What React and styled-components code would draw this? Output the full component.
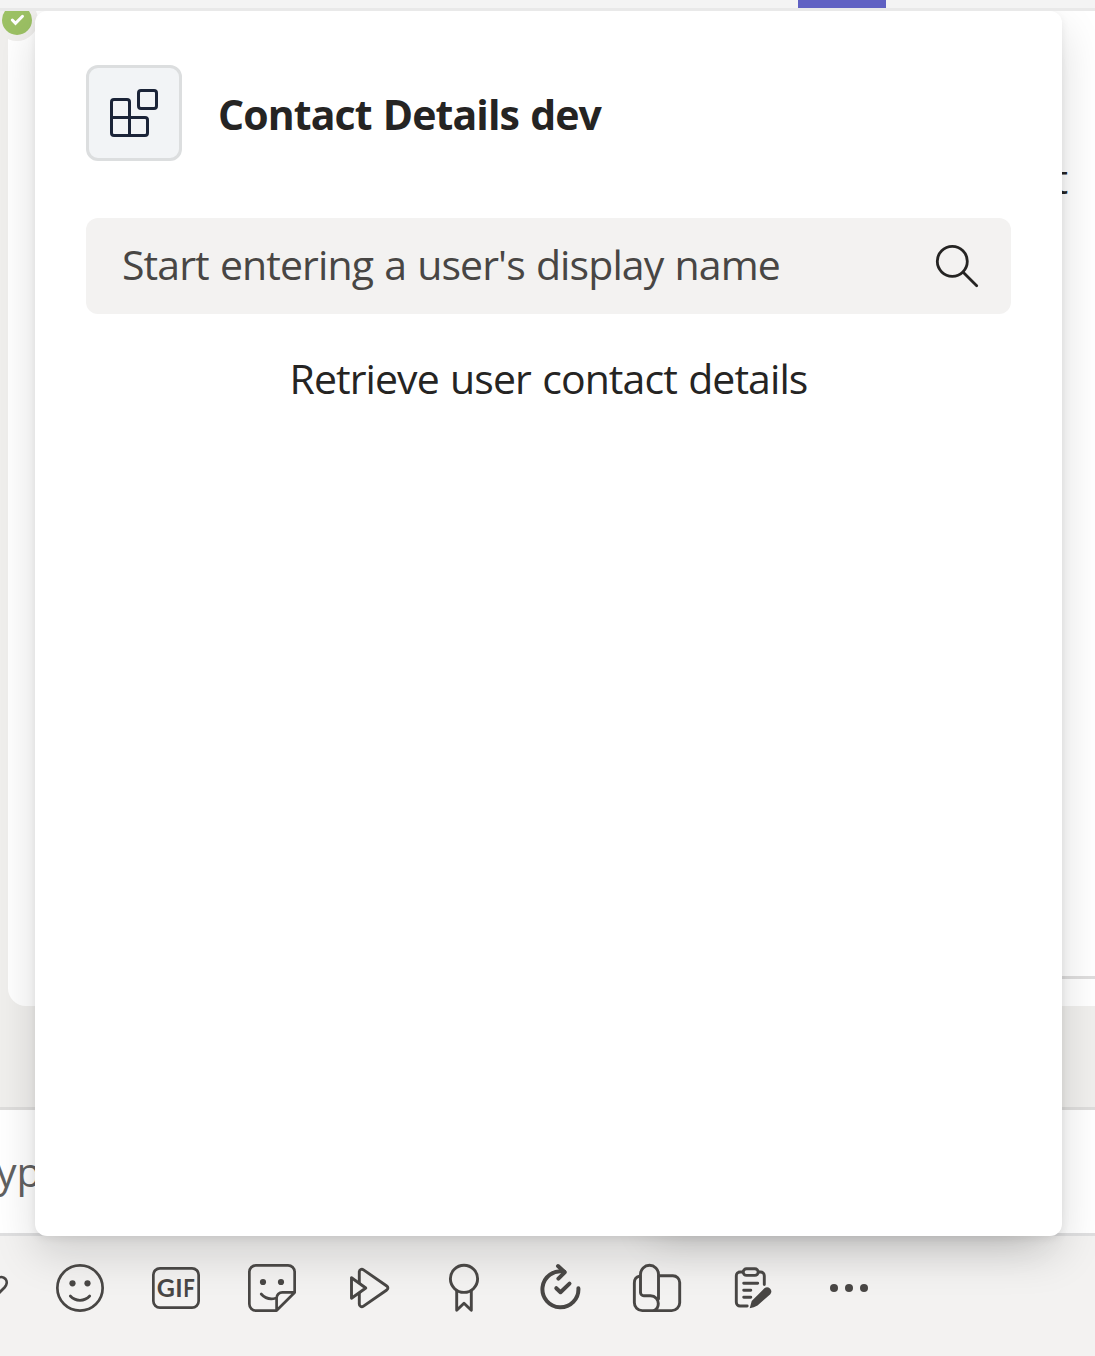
import React from "react";
import styled, { createGlobalStyle } from "styled-components";

const Global = createGlobalStyle`
  * { box-sizing: border-box; }
  body { margin: 0; font-family: "Open Sans", "Noto Sans", sans-serif; color: #252423; }
  svg { display: block; flex: none; }
`;

const Window = styled.div`
  position: relative;
  width: 1095px;
  height: 1356px;
  overflow: hidden;
  display: flex;
  flex-direction: column;
  background: #f2f1f0;
`;

const TopBar = styled.header`
  height: 11px;
  flex: none;
  padding-left: 798px;
  background: #f4f4f4;
  border-bottom: 3px solid #e9e9e9;
`;

const ActiveTab = styled.div`
  width: 88px;
  height: 8px;
  background: #6061c3;
`;

const Conversation = styled.main`
  position: relative;
  height: 1096px;
  flex: none;
  padding: 0 0 101px 8px;
  background: #f0efed;
  overflow: hidden;
`;

const Message = styled.section`
  height: 995px;
  display: flex;
  flex-direction: column;
  align-items: flex-end;
  background: #fff;
  border-bottom-left-radius: 18px;
`;

const MessageText = styled.p`
  flex: 1;
  width: 100%;
  margin: 0;
  padding: 139px 27px 0 0;
  font-size: 41px;
  line-height: 56px;
  text-align: right;
`;

const MessageFooter = styled.div`
  width: 900px;
  height: 30px;
  border-top: 3px solid #dedddd;
`;

const Presence = styled.svg`
  position: absolute;
  left: -4px;
  top: -12px;
`;

const ComposeBox = styled.div`
  height: 129px;
  flex: none;
  padding-top: 33px;
  border-top: 3px solid #dedddc;
  border-bottom: 3px solid #dfdfe0;
  background: #fff;
  color: #616161;
  font-size: 41px;
  line-height: 56px;
  text-indent: -4px;
`;

const Toolbar = styled.nav`
  height: 120px;
  display: flex;
  align-items: flex-start;
  gap: 48px;
  padding-top: 28px;
  background: #f3f2f1;
`;

const ToolIcon = styled.svg`
  position: relative;
  z-index: 2;
  height: 48px;
  width: ${(p) => p.$width || 48}px;
  margin-left: ${(p) => p.$nudge || 0}px;
  overflow: visible;
  fill: none;
  stroke: #484644;
  stroke-width: ${(p) => p.$stroke || 2.7};
  stroke-linecap: round;
  stroke-linejoin: round;

  .solid { fill: #484644; stroke: none; }
  text { font: 700 25px Lato, sans-serif; fill: #484644; stroke: none; }
`;

const ShadowFrame = styled.div`
  position: absolute;
  inset: 11px 0 0 0;
  overflow: hidden;
`;

const DeepShadow = styled.div`
  position: absolute;
  left: 655px;
  top: 40px;
  width: 375px;
  height: 1175px;
  box-shadow: 0 10px 40px rgba(0, 0, 0, 0.16);
`;

const Popup = styled.section`
  position: absolute;
  left: 35px;
  top: 0;
  width: 1027px;
  height: 1225px;
  display: flex;
  flex-direction: column;
  padding: 54px 51px 0;
  background: #fff;
  border-radius: 12px;
  box-shadow: 0 19px 44px rgba(0, 0, 0, 0.14), 0 3px 8px rgba(0, 0, 0, 0.07);
`;

const PopupHeader = styled.div`
  display: flex;
  align-items: center;
  gap: 36px;
  height: 96px;
`;

const AppTile = styled.div`
  width: 96px;
  height: 96px;
  display: grid;
  place-items: center;
  border: 3px solid #dcdedf;
  border-radius: 12px;
  background: #f2f4f6;
`;

const Title = styled.h1`
  margin: 0;
  padding-top: 1px;
  font-size: 41px;
  line-height: 56px;
  font-weight: 700;
  letter-spacing: -0.9px;
  word-spacing: 1.4px;
  white-space: nowrap;
`;

const SearchField = styled.div`
  display: flex;
  align-items: center;
  justify-content: space-between;
  height: 96px;
  margin-top: 57px;
  padding: 0 32px 0 36px;
  border-radius: 12px;
  background: #f3f2f1;
`;

const Placeholder = styled.span`
  padding-bottom: 4px;
  font-size: 41px;
  line-height: 56px;
  letter-spacing: -0.9px;
  word-spacing: 1.4px;
  color: #484644;
  white-space: nowrap;
`;

const Hint = styled.p`
  margin: 36px 0 0;
  font-size: 41px;
  line-height: 56px;
  letter-spacing: -0.92px;
  word-spacing: 1.6px;
  text-align: center;
  white-space: nowrap;
`;

export default function App() {
  return (
    <Window>
      <Global />
      <TopBar><ActiveTab /></TopBar>
      <Conversation>
        <Message>
          <MessageText>t</MessageText>
          <MessageFooter />
        </Message>
        <Presence width="42" height="42" viewBox="0 0 42 42">
          <circle cx="21" cy="21" r="21" fill="#f0efed" />
          <circle cx="21" cy="21" r="15" fill="#9cc164" />
          <path d="M16.3 21 19.5 24.3 26.5 17.3" fill="none" stroke="#fff" strokeWidth="3" strokeLinecap="round" />
        </Presence>
      </Conversation>
      <ComposeBox>yp</ComposeBox>
      <Toolbar>
        <ToolIcon $width={8} viewBox="0 0 8 48">
          <path d="M-3 14.5C0 12.5 3.500 12.800 5.500 15C7.500 17.500 6.800 21 4.500 23.500L-2 30" />
        </ToolIcon>
        <ToolIcon viewBox="0 0 48 48">
          <circle cx="24" cy="24" r="22.650" />
          <circle className="solid" cx="16.500" cy="19.300" r="3.100" />
          <circle className="solid" cx="31.500" cy="19.300" r="3.100" />
          <path d="M14.300 32C19.500 37.700 28.500 37.700 33.700 32" />
        </ToolIcon>
        <ToolIcon viewBox="0 0 48 48">
          <rect x="1.350" y="4.350" width="45.300" height="39.300" rx="6.600" />
          <text x="4.800" y="33">G</text>
          <text x="23.300" y="33">I</text>
          <text x="31.200" y="33" textLength="11.500" lengthAdjust="spacingAndGlyphs">F</text>
        </ToolIcon>
        <ToolIcon viewBox="0 0 48 48">
          <path d="M28.300 46.650H8A6.650 6.650 0 0 1 1.350 40V8A6.650 6.650 0 0 1 8 1.350H40A6.650 6.650 0 0 1 46.650 8V28.500L28.600 46.500V34A5.700 5.700 0 0 1 34.300 28.300H46.500" />
          <circle className="solid" cx="15" cy="18" r="3.100" />
          <circle className="solid" cx="33" cy="18" r="3.100" />
          <path d="M13.200 30C17 34.300 22.500 35.600 27.500 34.300" />
        </ToolIcon>
        <ToolIcon $stroke={2.9} viewBox="0 0 48 48">
          <path d="M15.300 18.500V8C15.300 5.500 17.600 4.600 19.500 5.900L42.400 21.800C44.400 23.200 44.400 24.800 42.400 26.200L19.500 42.100C17.600 43.400 15.300 42.500 15.300 40V29.500" />
          <path d="M7.500 13.700V34.300L21.800 24Z" />
        </ToolIcon>
        <ToolIcon $stroke={2.9} viewBox="0 0 48 48">
          <circle cx="24" cy="14.800" r="13.600" />
          <path d="M16.700 27V46.300L24 39.300L31.300 46.300V27" />
        </ToolIcon>
        <ToolIcon $stroke={4} viewBox="0 0 48 48">
          <path d="M42.400 24.300A18 18 0 1 1 28.200 7.700" />
          <path d="M22 2L28.700 8.300L22.400 14.600" />
          <path d="M20.300 24.200L24.500 28.200L33.500 19.600" />
        </ToolIcon>
        <ToolIcon $nudge={1} $stroke={2.9} viewBox="0 0 48 48">
          <path d="M6.500 12.200C3 13 1.350 15.500 1.350 19V38.500A8 8 0 0 0 9.300 46.650H38.700A8 8 0 0 0 46.700 38.700V18.500A6.800 6.800 0 0 0 39.900 11.700H26" />
          <path d="M25.500 35V10.300A9 9 0 0 0 7.500 10.300V28.500A3.300 3.300 0 0 0 10.800 31.800H17.500C22.500 31.800 25.300 35.500 25.300 39.500C25.300 43 23.600 45.500 21 46.500" />
        </ToolIcon>
        <ToolIcon $stroke={2.9} viewBox="0 0 48 48">
          <path d="M13.500 8H11A3.700 3.700 0 0 0 7.300 11.700V38.300A3.700 3.700 0 0 0 11 42H18.200M29.500 8H31.600A3.700 3.700 0 0 1 35.300 11.700V20.500" />
          <rect x="14.200" y="4.800" width="15" height="6.600" rx="3.300" />
          <path d="M14.700 19.300H28.700M14.700 26.300H21.800M14.700 33.300H21.800" />
          <path className="solid" d="M20.700 44.300L22.700 37L35.400 24.300A4.200 4.200 0 0 1 41.300 30.200L28.500 41.500Q25 43.800 20.700 44.300Z" />
        </ToolIcon>
        <ToolIcon viewBox="0 0 48 48">
          <circle className="solid" cx="9" cy="24" r="4" />
          <circle className="solid" cx="24" cy="24" r="4" />
          <circle className="solid" cx="39" cy="24" r="4" />
        </ToolIcon>
      </Toolbar>
      <ShadowFrame>
        <DeepShadow />
        <Popup>
          <PopupHeader>
            <AppTile>
              <svg width="48" height="48" viewBox="0 0 48 48" fill="none" stroke="#1b2438" strokeWidth="3">
                <path d="M1.500 28.500V13Q1.500 10.500 4 10.500H17Q19.500 10.500 19.500 13V46.500M1.500 28.500H35Q37.500 28.500 37.500 31V44Q37.500 46.500 35 46.500H4Q1.500 46.500 1.500 44Z" />
                <rect x="28.500" y="1.500" width="18" height="18" rx="2.500" />
              </svg>
            </AppTile>
            <Title>Contact Details dev</Title>
          </PopupHeader>
          <SearchField>
            <Placeholder>Start entering a user's display name</Placeholder>
            <svg width="44" height="44" viewBox="0 0 44 44" fill="none" stroke="#252423" strokeWidth="2.800" strokeLinecap="round">
              <circle cx="17.300" cy="17.300" r="15" />
              <path d="M28.200 28.200L41.700 41.700" />
            </svg>
          </SearchField>
          <Hint>Retrieve user contact details</Hint>
        </Popup>
      </ShadowFrame>
    </Window>
  );
}
